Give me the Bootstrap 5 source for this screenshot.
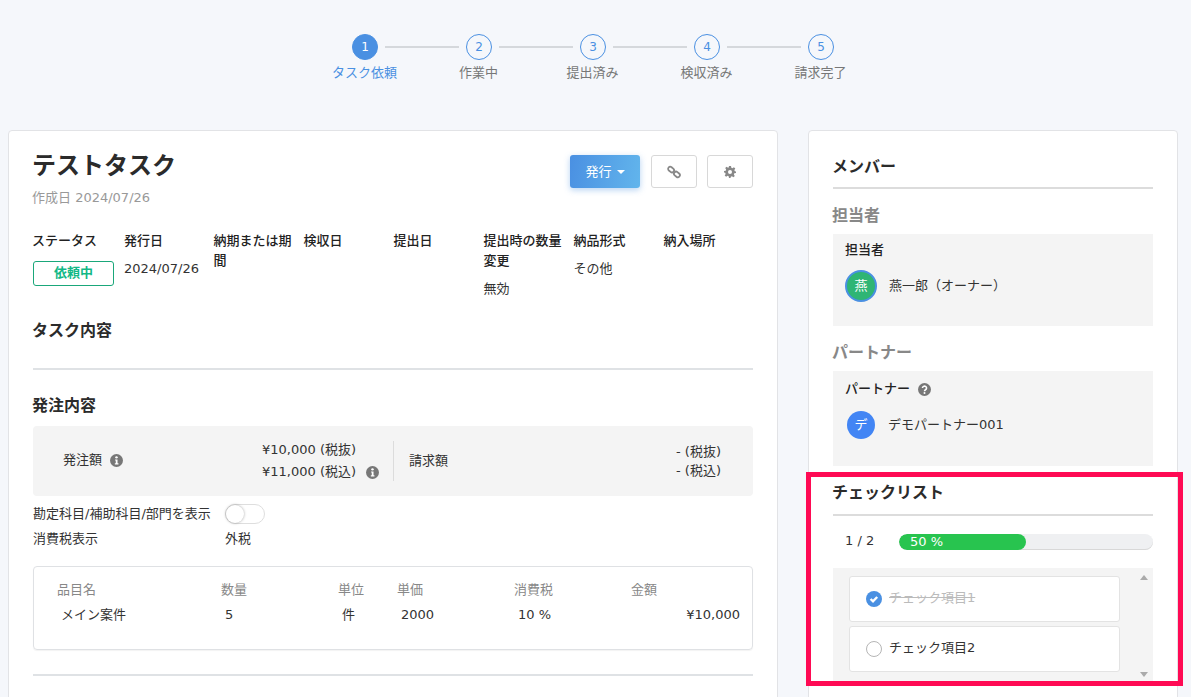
<!DOCTYPE html>
<html lang="ja">
<head>
<meta charset="utf-8">
<title>テストタスク</title>
<link href="https://cdn.jsdelivr.net/npm/bootstrap@5.3.0/dist/css/bootstrap.min.css" rel="stylesheet">
<style>
html,body{height:697px;overflow:hidden}
body{background:#f5f7fb;color:#333;font:13px/20px "DejaVu Sans","Noto Sans CJK JP",sans-serif;position:relative}
.steps-top{padding:34px 5px 0 0;height:60px}
.step-dot{width:26px;height:26px;border-radius:50%;border:1px solid #4a90e2;color:#4a90e2;font-size:12px;line-height:24px;text-align:center}
.step-dot.on{background:#4a90e2;color:#fff}
.step-line{width:74px;height:2px;background:#d5d8dc;margin:0 7px}
.steps-labels{padding:3px 6px 0 0;height:70px}
.step-name{width:114px;text-align:center;color:#777;line-height:20px}
.step-name.on{color:#4a90e2}
.panels{gap:30px;padding-left:8px;height:567px;overflow:hidden}
.panel-left,.panel-right{height:590px;flex:none;background:#fff;border:1px solid #e2e3e6;border-radius:4px;padding:0 24px}
.panel-left{width:770px;padding:18px 24px 0 23px}
.panel-right{width:370px;padding-top:24px}
.task-title{font-size:24px;line-height:34px;font-weight:700;color:#2b2b2b;margin:0}
.task-date{color:#999;margin-top:5px}
.act-group{gap:10px;padding-top:6px}
.act-btn{height:33px;width:46px;background:#fff;border:1px solid #d8d8d8;border-radius:3px;padding:0}
.act-main{width:70px;height:33px;border:0;border-radius:3px;color:#fff;background:linear-gradient(100deg,#4a90e2,#62b5ec);box-shadow:0 2px 6px rgba(74,144,226,.4);padding:0;font-size:13px;margin-right:1px}
.caret-mark{display:inline-block;border:4px solid transparent;border-top-color:#fff;border-bottom:0;margin-left:1px;vertical-align:middle}
.meta-grid{display:grid;grid-template-columns:92px 89.5px 90px 90px 90px 90px 90px 90px;margin-top:23px;height:68px;color:#333}
.meta-label{font-weight:500;color:#222;padding-right:4px}
.meta-val{margin-top:8px}
.state-tag{width:81px;height:25px;margin:10px 0 0 1px;border:1px solid #1aa77a;border-radius:3px;color:#12b886;font-weight:700;line-height:21px;text-align:center}
.sec-head{font-size:16px;line-height:24px;font-weight:700;color:#2b2b2b;margin:0}
.sec-rule{height:2px;background:#dfe2e5;border:0;margin:0 0 0 1px;opacity:1}
.head-task{margin-top:20px}
.rule-a{margin-top:25px}
.head-b{margin-top:24px}
.rule-c{margin-top:24px}
.amount-box{height:70px;background:#f4f4f4;border-radius:4px;margin:8px 0 0 1px}
.amount-left{width:360px}
.amount-name{width:229px;padding:0 0 2px 30px}
.amount-lines{line-height:22px}
.amount-tip{margin-left:2px}
.amount-right{height:40px;width:359px;border-left:1px solid #dcdcdc;padding:0 31px 0 15px}
.amount-rows{line-height:19px;text-align:right}
.switch-row{margin:8px 0 0 1px}
.opt-name{width:192px}
.switch-shape{width:40px;height:20px;border:1px solid #dedede;border-radius:10px;background:#fff;padding:0}
.switch-knob{display:block;width:18px;height:18px;border-radius:50%;background:#fff;box-shadow:0 0 3px rgba(0,0,0,.35)}
.tax-row{margin:5px 0 0 1px}
.lines-card{height:84px;margin:17px 0 0 1px;border:1px solid #dfe1e4;border-radius:4px;padding:13px 12px 0 23px;display:grid;grid-template-columns:164px 117px 59px 117px 117px 1fr;grid-auto-rows:20px;row-gap:5px;box-shadow:0 1px 1px rgba(0,0,0,.05)}
.col-h{color:#888}
.col-v{padding-left:4px}
.side-head{margin-left:-1px}
.side-rule{height:2px;background:#dcdcdc;border:0;margin:9px 0 0;opacity:1}
.rule-first{margin-top:8px}
.sub-head{font-size:16px;line-height:24px;font-weight:700;color:#888;margin:15px 0 0 -1px}
.member-box{background:#f4f4f4;margin-top:6px;padding:6px 12px 0}
.member-name{font-weight:500;color:#222}
.box-a{height:92px}
.box-b{height:95px;padding-top:8px}
.member-line-a{margin-top:10px;gap:12px}
.member-line-b{margin-top:12px;gap:13px}
.member-txt-b{margin-top:4px}
.head-check{margin-top:15px}
.face{border-radius:50%;color:#fff;text-align:center;flex:none}
.face-green{width:32px;height:32px;background:#2fb574;border:2px solid #4a90e2;line-height:28px}
.face-blue{width:28px;height:28px;margin-left:2px;background:#4285f4;line-height:28px}
.prog-wrap{height:16px;margin-top:18px;padding-left:12px}
.prog-text{width:54px;line-height:14px;padding-bottom:2px}
.prog-track{height:16px;flex:1;border-radius:8px;background:#eff0f2;box-shadow:inset 0 -1px 0 #d8d8d8;font-size:13px}
.prog-fill{background:#28c44f;border-radius:8px;text-align:left;padding-left:11px;color:#fff;overflow:visible;line-height:14px;white-space:nowrap;justify-content:center}
.check-box{height:114px;margin-top:18px;background:#f4f4f4;padding:8px 0 0 16px}
.check-item{width:271px;height:46px;background:#fff;border:1px solid #e3e3e3;border-radius:3px;padding-left:16px;margin-bottom:4px;gap:7px}
.check-label{padding-bottom:2px}
.check-done{color:#bbb;text-decoration:line-through}
.scroll-arrows{flex:1;height:102px;margin-top:-1px;padding-right:5px}
.tri-up,.tri-down{width:0;height:0;border-left:4px solid transparent;border-right:4px solid transparent}
.tri-up{border-bottom:5px solid #aaa}
.tri-down{border-top:5px solid #aaa}
.focus-frame{position:absolute;left:806px;top:472px;width:377px;height:214px;border:5px solid #ff0a54;pointer-events:none}
</style>
</head>
<body>
<div class="d-flex justify-content-center align-items-center steps-top">
  <div class="step-dot on">1</div><div class="step-line"></div>
  <div class="step-dot">2</div><div class="step-line"></div>
  <div class="step-dot">3</div><div class="step-line"></div>
  <div class="step-dot">4</div><div class="step-line"></div>
  <div class="step-dot">5</div>
</div>
<div class="d-flex justify-content-center steps-labels">
  <div class="step-name on">タスク依頼</div><div class="step-name">作業中</div><div class="step-name">提出済み</div><div class="step-name">検収済み</div><div class="step-name">請求完了</div>
</div>

<div class="d-flex panels">
  <div class="panel-left">
    <div class="d-flex justify-content-between">
      <div>
        <h1 class="task-title">テストタスク</h1>
        <div class="task-date">作成日 2024/07/26</div>
      </div>
      <div class="d-flex align-items-start act-group">
        <button class="act-main" type="button">発行 <span class="caret-mark"></span></button>
        <button class="act-btn" type="button"><svg width="14" height="14" viewBox="0 0 14 14" fill="none" stroke="#888" stroke-width="1.8"><rect x=".9" y="2.4" width="6.4" height="4.2" rx="2.1" transform="rotate(40 4 4.5)"/><rect x="6.7" y="7.4" width="6.4" height="4.2" rx="2.1" transform="rotate(40 10 9.5)"/></svg></button>
        <button class="act-btn" type="button"><svg width="12" height="12" viewBox="0 0 24 24"><path fill="#888" fill-rule="evenodd" d="M10 0h4l.7 3.4 2.2.9L19.8 2.400l2.800 2.800-1.900 2.900.9 2.200L24 11v3l-3.400.7-.9 2.200 1.900 2.900-2.800 2.800-2.900-1.900-2.200.9L13 24h-3l-.7-3.400-2.200-.9-2.900 1.900-2.800-2.800 1.900-2.900-.9-2.200L0 13v-3l3.400-.7.9-2.200L2.400 4.200 5.200 1.400l2.900 1.900 1.200-.4zM12 8a4 4 0 1 0 0 8 4 4 0 0 0 0-8z"/></svg></button>
      </div>
    </div>

    <div class="meta-grid">
      <div><div class="meta-label">ステータス</div><div class="state-tag">依頼中</div></div>
      <div><div class="meta-label">発行日</div><div class="meta-val">2024/07/26</div></div>
      <div><div class="meta-label">納期または期間</div></div>
      <div><div class="meta-label">検収日</div></div>
      <div><div class="meta-label">提出日</div></div>
      <div><div class="meta-label">提出時の数量変更</div><div class="meta-val">無効</div></div>
      <div><div class="meta-label">納品形式</div><div class="meta-val">その他</div></div>
      <div><div class="meta-label">納入場所</div></div>
    </div>

    <h2 class="sec-head head-task">タスク内容</h2>
    <hr class="sec-rule rule-a">
    <h2 class="sec-head head-b">発注内容</h2>

    <div class="amount-box d-flex align-items-center">
      <div class="amount-left d-flex align-items-center">
        <div class="amount-name d-flex align-items-center gap-2">発注額 <svg width="13" height="13" viewBox="0 0 14 14"><circle cx="7" cy="7" r="7" fill="#777"/><circle cx="7" cy="3.600" r="1.300" fill="#fff"/><path fill="#fff" d="M5.500 5.800h2.600v4.200h1v1.300H5.200V10h1V7H5.500z"/></svg></div>
        <div class="amount-lines">
          <div>¥10,000 (税抜)</div>
          <div class="d-flex align-items-center gap-2">¥11,000 (税込) <svg class="amount-tip" width="13" height="13" viewBox="0 0 14 14"><circle cx="7" cy="7" r="7" fill="#777"/><circle cx="7" cy="3.600" r="1.300" fill="#fff"/><path fill="#fff" d="M5.500 5.800h2.600v4.200h1v1.300H5.200V10h1V7H5.500z"/></svg></div>
        </div>
      </div>
      <div class="amount-right d-flex justify-content-between align-items-center">
        <div>請求額</div>
        <div class="amount-rows"><div>- (税抜)</div><div>- (税込)</div></div>
      </div>
    </div>

    <div class="switch-row d-flex align-items-center">
      <div class="opt-name">勘定科目/補助科目/部門を表示</div>
      <div class="switch-shape"><span class="switch-knob"></span></div>
    </div>
    <div class="tax-row d-flex">
      <div class="opt-name">消費税表示</div>
      <div>外税</div>
    </div>

    <div class="lines-card">
      <div class="col-h">品目名</div><div class="col-h">数量</div><div class="col-h">単位</div><div class="col-h">単価</div><div class="col-h">消費税</div><div class="col-h">金額</div>
      <div class="col-v">メイン案件</div><div class="col-v">5</div><div class="col-v">件</div><div class="col-v">2000</div><div class="col-v">10 %</div><div class="text-end">¥10,000</div>
    </div>
    <hr class="sec-rule rule-c">
  </div>

  <div class="panel-right">
    <h2 class="sec-head side-head">メンバー</h2>
    <hr class="side-rule rule-first">
    <h3 class="sub-head">担当者</h3>
    <div class="member-box box-a">
      <div class="member-name">担当者</div>
      <div class="d-flex align-items-center member-line-a">
        <div class="face face-green">燕</div><div>燕一郎（オーナー）</div>
      </div>
    </div>
    <h3 class="sub-head">パートナー</h3>
    <div class="member-box box-b">
      <div class="member-name d-flex align-items-center gap-2">パートナー <svg width="13" height="13" viewBox="0 0 14 14"><circle cx="7" cy="7" r="7" fill="#777"/><path fill="none" stroke="#fff" stroke-width="1.700" d="M4.800 5.400a2.200 2.100 0 1 1 3.300 1.900c-.8.500-1.100.9-1.100 1.500"/><circle cx="7" cy="10.800" r="1.100" fill="#fff"/></svg></div>
      <div class="d-flex member-line-b">
        <div class="face face-blue">デ</div><div class="member-txt-b">デモパートナー001</div>
      </div>
    </div>
    <h2 class="sec-head side-head head-check">チェックリスト</h2>
    <hr class="side-rule">
    <div class="prog-wrap d-flex align-items-center">
      <div class="prog-text">1 / 2</div>
      <div class="progress prog-track"><div class="progress-bar prog-fill" style="width:50%">50 %</div></div>
    </div>
    <div class="check-box d-flex">
      <div>
        <div class="check-item d-flex align-items-center">
          <svg width="16" height="16" viewBox="0 0 16 16"><circle cx="8" cy="8" r="8" fill="#4a90e2"/><path fill="none" stroke="#fff" stroke-width="2.400" d="M4.600 8l2.400 2.400 4.200-4.400"/></svg>
          <span class="check-label check-done">チェック項目1</span>
        </div>
        <div class="check-item d-flex align-items-center">
          <svg width="16" height="16" viewBox="0 0 16 16"><circle cx="8" cy="8" r="7.500" fill="#fff" stroke="#b5b5b5"/></svg>
          <span class="check-label">チェック項目2</span>
        </div>
      </div>
      <div class="scroll-arrows d-flex flex-column justify-content-between align-items-end">
        <div class="tri-up"></div><div class="tri-down"></div>
      </div>
    </div>
  </div>
</div>
<div class="focus-frame"></div>
</body>
</html>
